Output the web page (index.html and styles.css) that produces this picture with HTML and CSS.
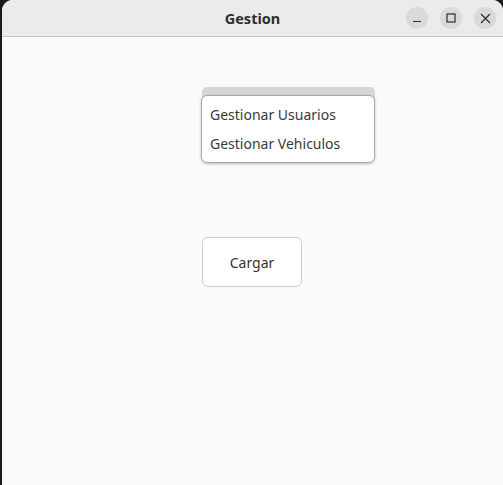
FILE: index.html
```html
<!DOCTYPE html>
<html>
<head>
<meta charset="utf-8">
<link rel="stylesheet" href="styles.css">
</head>
<body>
<div class="window">
  <div class="titlebar">
    <div class="title">Gestion</div>
    <div class="controls">
      <span class="ctl"><svg width="10" height="10" viewBox="0 0 10 10"><path d="M1 8.5H9" stroke="#2e2e2e" stroke-width="1.2"/></svg></span>
      <span class="ctl"><svg width="10" height="10" viewBox="0 0 10 10"><rect x="1" y="1" width="8" height="8" fill="none" stroke="#2e2e2e" stroke-width="1.2"/></svg></span>
      <span class="ctl"><svg width="11" height="11" viewBox="0 0 11 11"><path d="M1 1L10 10M10 1L1 10" stroke="#2e2e2e" stroke-width="1.3"/></svg></span>
    </div>
  </div>
  <div class="content">
    <div class="combo">
      <div class="popup">
        <div class="item">Gestionar Usuarios</div>
        <div class="item">Gestionar Vehiculos</div>
      </div>
    </div>
    <button class="btn">Cargar</button>
  </div>
</div>
</body>
</html>
```
FILE: styles.css
```css
html, body {
  margin: 0;
  padding: 0;
  height: 485px;
  background: #1b1a22;
  overflow: hidden;
  font-family: "Noto Sans", "DejaVu Sans", sans-serif;
}
.window {
  margin-left: 2px;
  height: 485px;
  background: #fafafa;
  border-radius: 11px 11px 0 0;
  overflow: hidden;
  display: flex;
  flex-direction: column;
}
.titlebar {
  height: 36px;
  flex: 0 0 36px;
  background: #ebebeb;
  border-bottom: 1px solid #c3c3c3;
  display: flex;
  align-items: center;
  justify-content: center;
  position: relative;
}
.title {
  font-weight: bold;
  font-size: 14.5px;
  color: #2e2e2e;
}
.controls {
  position: absolute;
  right: 7px;
  top: 7px;
  display: flex;
  gap: 12px;
}
.ctl {
  width: 22px;
  height: 22px;
  border-radius: 50%;
  background: #dadada;
  display: flex;
  align-items: center;
  justify-content: center;
}
.content {
  flex: 1;
  display: flex;
  flex-direction: column;
  align-items: flex-start;
  padding-left: 200px;
  padding-top: 50px;
}
.combo {
  width: 173px;
  height: 34px;
  background: #d6d6d6;
  border-radius: 5px;
  position: relative;
}
.popup {
  position: absolute;
  left: -1px;
  top: 8px;
  width: 172px;
  padding: 4px 0 4px 0;
  background: #ffffff;
  border: 1px solid #a8a8a8;
  border-radius: 6px;
  box-shadow: 0 1px 3px rgba(0,0,0,0.25);
}
.item {
  height: 29px;
  line-height: 29px;
  padding-left: 8px;
  font-size: 14px;
  color: #3a3a3a;
}
.btn {
  margin-top: 116px;
  width: 100px;
  height: 50px;
  background: #ffffff;
  border: 1px solid #cdcdcd;
  border-radius: 6px;
  font-family: inherit;
  font-size: 14px;
  color: #333333;
  padding: 0;
}
```
